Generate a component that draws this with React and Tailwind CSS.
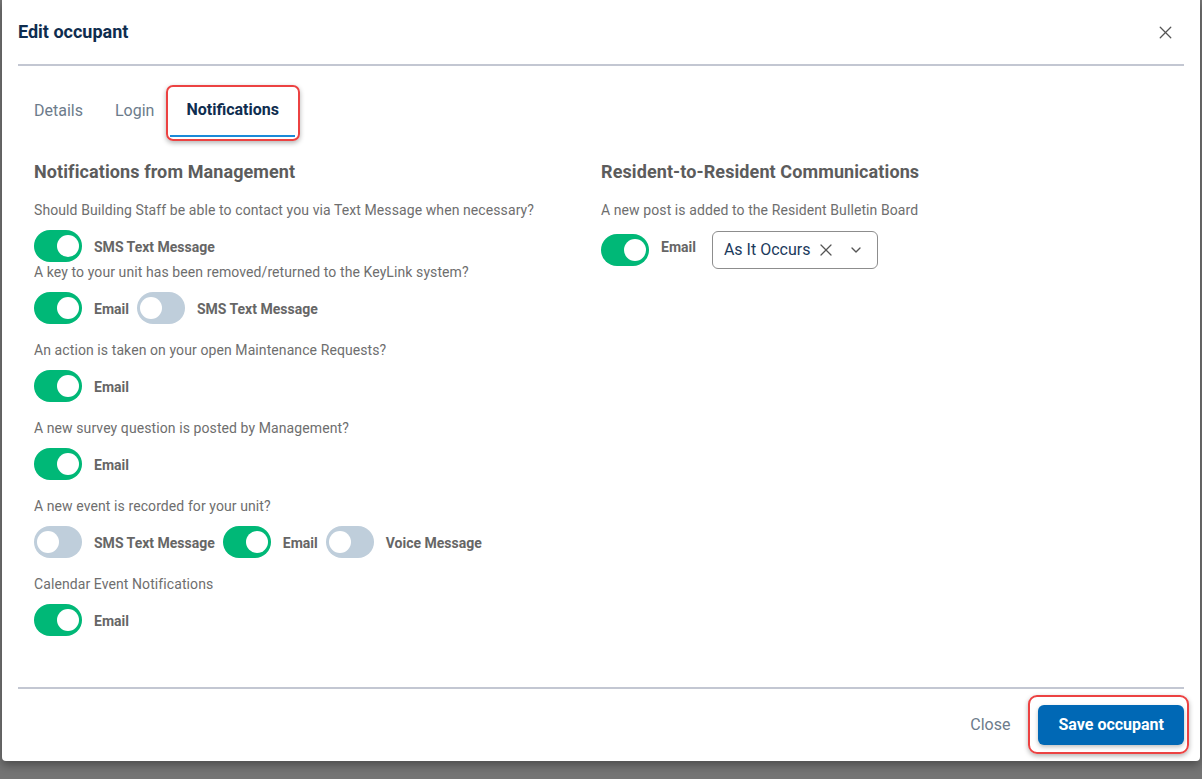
import { X, ChevronDown } from 'lucide-react';

function Toggle({ on }) {
  return (
    <span
      className={`inline-flex h-8 w-12 shrink-0 items-center rounded-full ${on ? 'justify-end bg-[#00b877] pr-[3px]' : 'justify-start bg-[#bfcedb] pl-[3px]'}`}
    >
      <span className="h-[22px] w-[22px] rounded-full bg-white" />
    </span>
  );
}

function Option({ on, label }) {
  return (
    <div className="flex items-center gap-3">
      <Toggle on={on} />
      <span className="mt-[1px] text-sm font-bold text-[#666]">{label}</span>
    </div>
  );
}

function Question({ text, options, first }) {
  return (
    <div className={first ? 'mt-4' : ''}>
      <p className="text-sm leading-5 tracking-[0.09px] text-[#6e6e6e]">{text}</p>
      <div className="mt-[10px] flex items-center gap-2">
        {options.map((o) => (
          <Option key={o.label} on={o.on} label={o.label} />
        ))}
      </div>
    </div>
  );
}

export default function App() {
  const questions = [
    { text: 'Should Building Staff be able to contact you via Text Message when necessary?', options: [{ on: true, label: 'SMS Text Message' }] },
    { text: 'A key to your unit has been removed/returned to the KeyLink system?', options: [{ on: true, label: 'Email' }, { on: false, label: 'SMS Text Message' }] },
    { text: 'An action is taken on your open Maintenance Requests?', options: [{ on: true, label: 'Email' }] },
    { text: 'A new survey question is posted by Management?', options: [{ on: true, label: 'Email' }] },
    { text: 'A new event is recorded for your unit?', options: [{ on: false, label: 'SMS Text Message' }, { on: true, label: 'Email' }, { on: false, label: 'Voice Message' }] },
    { text: 'Calendar Event Notifications', options: [{ on: true, label: 'Email' }] },
  ];

  return (
    <div className="h-[779px] w-full overflow-hidden bg-[#747474] font-['Roboto','Liberation_Sans',sans-serif]">
      <div className="ml-[2px] flex h-[761px] w-[1198px] flex-col rounded-b-[4px] bg-white shadow-[0_4px_10px_rgba(0,0,0,0.35)]">
        {/* Header */}
        <div className="flex h-16 items-center justify-between px-4">
          <h2 className="text-lg font-bold text-[#0f2d4f]">Edit occupant</h2>
          <button className="flex h-[38px] w-[38px] items-center justify-center text-[#555]">
            <X size={21} strokeWidth={1.5} />
          </button>
        </div>
        <div className="mx-4 h-[2px] bg-[#c3c7d2]" />

        {/* Tabs */}
        <div className="mt-[18px] flex px-4">
          <button className="h-[53px] pt-[1px] px-4 text-base text-[#6c7b8b]">Details</button>
          <button className="h-[53px] pt-[1px] px-4 text-base text-[#6c7b8b]">Login</button>
          <button className="relative h-[53px] border-b-2 border-[#1a8ad8] pt-[1px] px-4 text-base font-bold text-[#0f2d4f]">
            Notifications
            <span className="absolute -left-[4px] -right-[5px] top-[1px] -bottom-[6px] rounded-[7px] border-[2.5px] border-[#ec4242] shadow-[0_2px_5px_rgba(0,0,0,0.3)]" />
          </button>
        </div>

        {/* Content */}
        <div className="mt-[23px] grid flex-1 grid-cols-2 px-8">
          <div>
            <h3 className="text-lg leading-6 font-bold tracking-[0.1px] text-[#5c5c5c]">Notifications from Management</h3>
            <Question first {...questions[0]} />
            <Question {...questions[1]} />
            {questions.slice(2).map((q) => (
              <div key={q.text} className="mt-4">
                <Question {...q} />
              </div>
            ))}
          </div>
          <div>
            <h3 className="text-lg leading-6 font-bold tracking-[0.1px] text-[#5c5c5c]">Resident-to-Resident Communications</h3>
            <p className="mt-4 text-sm leading-5 tracking-[0.09px] text-[#6e6e6e]">A new post is added to the Resident Bulletin Board</p>
            <div className="mt-[11px] flex items-center">
              <Toggle on />
              <span className="mb-[6px] ml-3 text-sm font-bold text-[#666]">Email</span>
              <div className="ml-4 flex h-[38px] w-[166px] items-center rounded-md border border-[#8d8d8d] pl-[11px]">
                <span className="whitespace-nowrap text-base text-[#1b3a5c]">As It Occurs</span>
                <X size={20} strokeWidth={1.5} className="ml-[6px] shrink-0 text-[#555]" />
                <ChevronDown size={16} strokeWidth={2} className="ml-[12px] shrink-0 text-[#555]" />
              </div>
            </div>
          </div>
        </div>

        {/* Footer */}
        <div className="mx-4 h-[2px] bg-[#c3c7d2]" />
        <div className="flex items-center justify-end px-4 py-4">
          <button className="mr-[28px] text-base text-[#6c7b8b]">Close</button>
          <button className="relative h-10 rounded-md bg-[#0068b5] px-5 text-base font-bold text-white shadow-[0_2px_4px_rgba(0,0,0,0.25)]">
            Save occupant
            <span className="absolute -left-[10px] -right-[5px] -top-[10px] -bottom-[9px] rounded-[9px] border-[2.5px] border-[#ec4242] shadow-[0_2px_5px_rgba(0,0,0,0.3)]" />
          </button>
        </div>
      </div>
    </div>
  );
}
